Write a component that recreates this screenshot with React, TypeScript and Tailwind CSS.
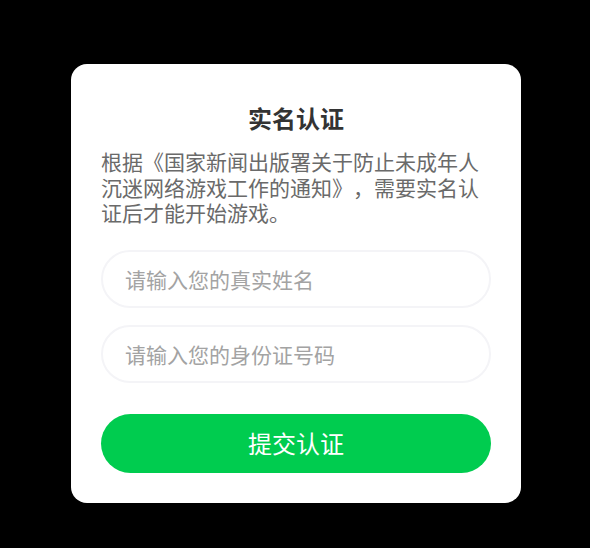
import React from "react"

const font = { fontFamily: '"Noto Sans CJK SC", "Noto Sans", sans-serif' }

export default function App() {
  return (
    <div className="w-[590px] h-[548px] bg-black flex items-start pl-[71px] pt-[64px]" style={font} lang="zh-CN">
      <div className="w-[450px] bg-white rounded-[16px] px-[30px] pt-[38px] pb-[30px] flex flex-col [text-spacing-trim:space-all]">
        <h1 className="text-center text-[24px] leading-[32px] font-bold text-[#333]">实名认证</h1>
        <p className="mt-[15px] text-[21px] leading-[25.5px] text-[#6a6a6a]">
          根据《国家新闻出版署关于防止未成年人沉迷网络游戏工作的通知》，需要实名认证后才能开始游戏。
        </p>
        <input
          className="mt-[24px] h-[58px] w-full rounded-full border-2 border-[#f4f4f7] px-[22px] text-[21px] text-[#333] placeholder:text-[#a3a3a3] outline-none"
          placeholder="请输入您的真实姓名"
        />
        <input
          className="mt-[17px] h-[58px] w-full rounded-full border-2 border-[#f4f4f7] px-[22px] text-[21px] text-[#333] placeholder:text-[#a3a3a3] outline-none"
          placeholder="请输入您的身份证号码"
        />
        <button className="mt-[31px] h-[59px] w-full rounded-full bg-[#00cc4f] text-white text-[24px]">
          提交认证
        </button>
      </div>
    </div>
  )
}
